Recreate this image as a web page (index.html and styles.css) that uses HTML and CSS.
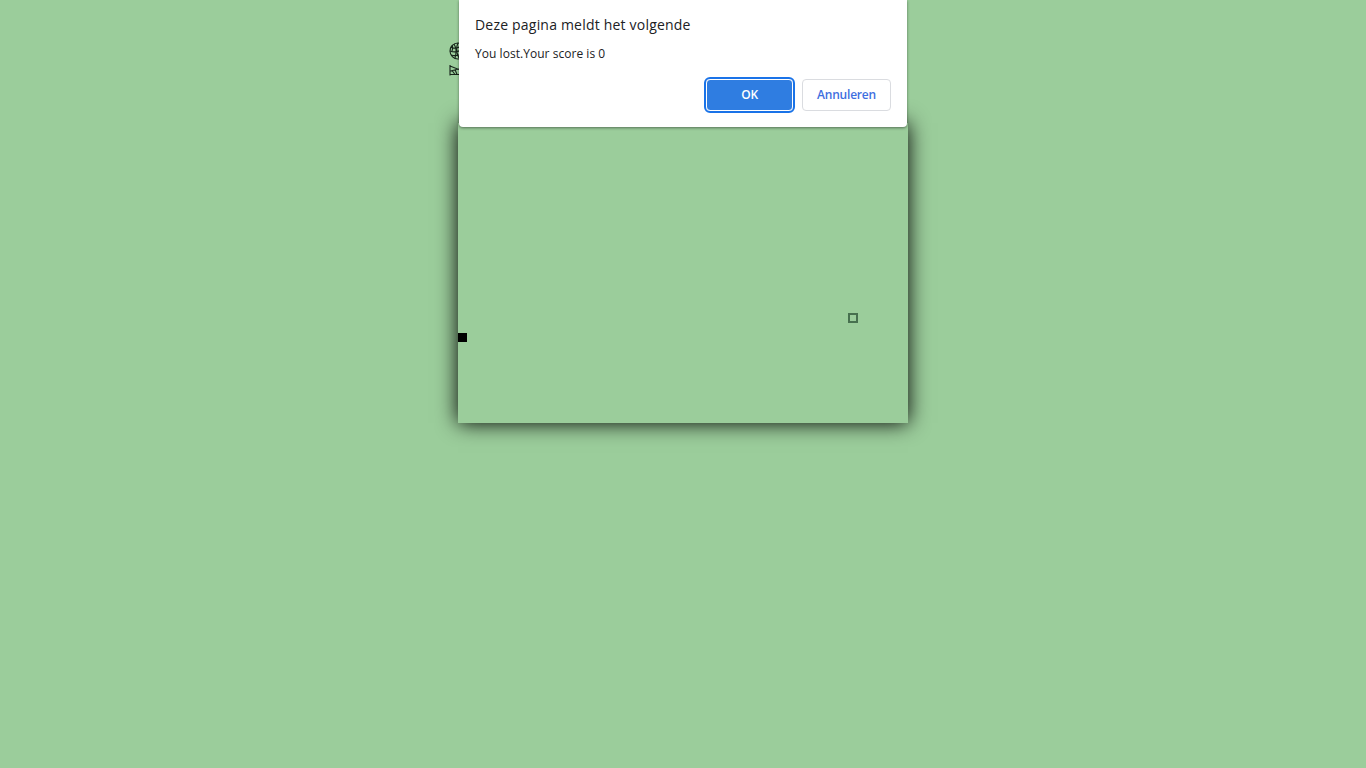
FILE: index.html
```html
<!DOCTYPE html>
<html lang="nl">
<head>
    <meta charset="UTF-8">
    <meta name="viewport" content="width=device-width, initial-scale=1.0">
    <title>Snake</title>
    <link rel="stylesheet" href="styles.css">
</head>
<body>
    <div class="game">
        <div class="logo">
            <svg class="logo-globe" width="12" height="18" viewBox="0 0 12 18" fill="none" stroke="#16241a" stroke-width="1.1">
                <circle cx="9" cy="9" r="8"/>
                <path d="M1.500 5c3 1.500 7 1.500 10.500-1M1 9c4 1.500 7 1.500 11-1M2 13c3 1 6 1 10-.5M5 2c2 3 2.500 9 1 14M9 1c-2 4-1.500 11 1 15M3 3c1 2 1 3 0 6"/>
            </svg>
            <svg class="logo-flag" width="10" height="11" viewBox="0 0 10 11" fill="none" stroke="#16241a" stroke-width="1.1">
                <path d="M1 0v10.500M1 1l9 3.500M1.500 6l8.500-2M1 9.500h9M3 5.500l3 4M6 4.500l2 5"/>
            </svg>
        </div>
        <div class="board">
            <div class="snake"></div>
            <div class="food"></div>
        </div>
    </div>

    <div class="dialog">
        <div class="dialog-title">Deze pagina meldt het volgende</div>
        <div class="dialog-text">You lost.Your score is 0</div>
        <div class="dialog-buttons">
            <button class="btn btn-ok">OK</button>
            <button class="btn btn-cancel">Annuleren</button>
        </div>
    </div>
</body>
</html>
```

FILE: styles.css
```css
body {
    margin: 0;
    height: 768px;
    overflow: hidden;
    background-color: #9bcd9b;
    font-family: "Open Sans", "Noto Sans", sans-serif;
}
.game {
    width: 450px;
    margin-left: 458px;
    padding-top: 42px;
}
.logo {
    height: 81px;
    margin-left: -9px;
}
.logo-globe,
.logo-flag {
    display: block;
}
.logo-flag {
    margin-top: 5px;
}
.board {
    position: relative;
    width: 450px;
    height: 300px;
    box-shadow: 0 0 20px #000;
    background-color: #9bcd9b;
}
.snake {
    position: absolute;
    left: 0;
    top: 210px;
    width: 9px;
    height: 9px;
    background-color: #000;
}
.food {
    position: absolute;
    left: 390px;
    top: 190px;
    width: 6px;
    height: 6px;
    border: 2px solid #47704f;
}
.dialog {
    position: absolute;
    left: 459px;
    top: 0;
    width: 448px;
    height: 127px;
    box-sizing: border-box;
    padding: 15px 16px 0;
    background-color: #fff;
    border-radius: 0 0 4px 4px;
    box-shadow: 0 1px 3px rgba(0,0,0,0.45);
}
.dialog-title {
    font-size: 14px;
    line-height: 20px;
    letter-spacing: 0.2px;
    color: #202124;
}
.dialog-text {
    margin-top: 10px;
    font-size: 12px;
    line-height: 18px;
    letter-spacing: 0.04px;
    color: #202124;
}
.dialog-buttons {
    display: flex;
    justify-content: flex-end;
    align-items: center;
    gap: 9px;
    margin-top: 16px;
}
.btn {
    height: 32px;
    box-sizing: border-box;
    padding: 0 0 2px;
    border-radius: 4px;
    font-family: inherit;
    font-size: 12px;
    font-weight: 600;
    letter-spacing: -0.2px;
}
.btn-ok {
    width: 87px;
    background-color: #2f7de1;
    color: #fff;
    border: 1px solid #fff;
    outline: 2px solid #1a73e8;
}
.btn-cancel {
    width: 89px;
    background-color: #fff;
    color: #3f6fe0;
    border: 1px solid #dadce0;
}
```
